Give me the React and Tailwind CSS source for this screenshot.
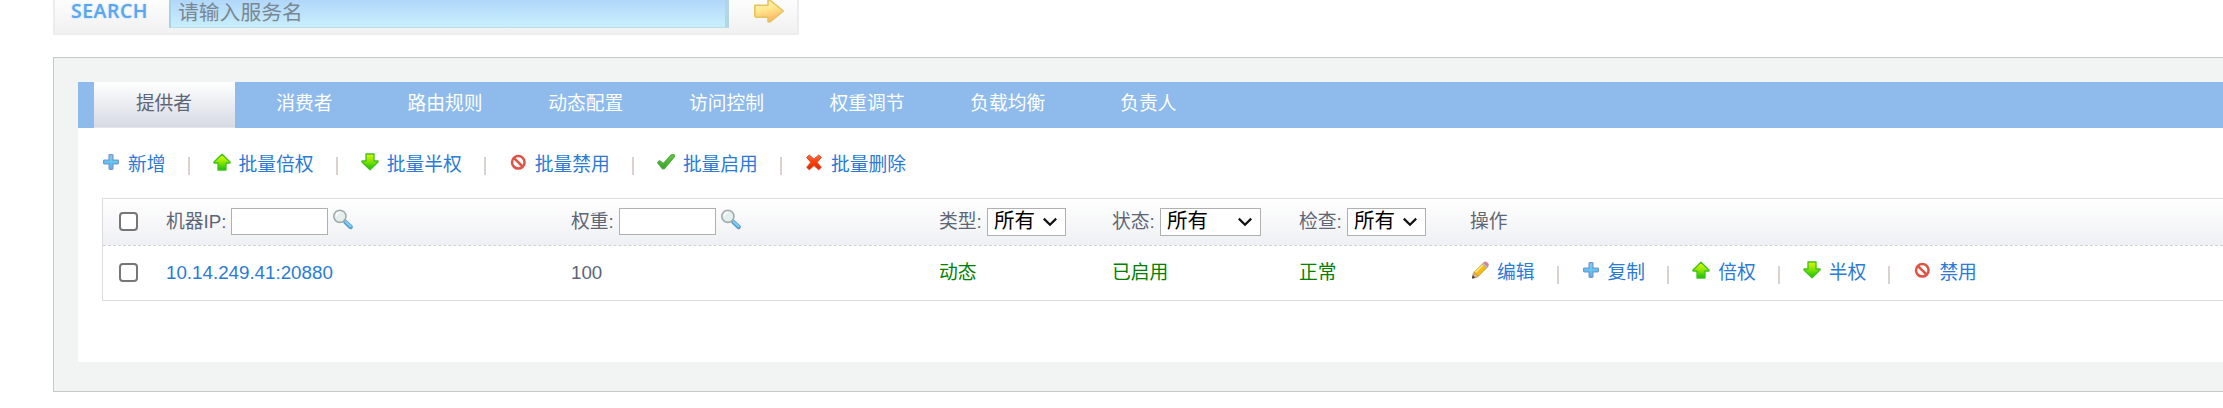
import React from "react";

const iconClass = "block h-6 w-6 shrink-0";

function PlusIcon() {
  return (
    <svg viewBox="0 0 24 24" className={iconClass}>
      <defs>
        <linearGradient id="plus" x1="0" y1="0" x2="0" y2="1">
          <stop offset="0" stopColor="#8fc9ee" />
          <stop offset="0.5" stopColor="#5fc8f4" />
          <stop offset="1" stopColor="#62aee6" />
        </linearGradient>
      </defs>
      <path
        d="M10.9 4.6h2.2a.8.8 0 0 1 .8.8v4.7h4.7a.8.8 0 0 1 .8.8v2.2a.8.8 0 0 1-.8.8h-4.7v4.7a.8.8 0 0 1-.8.8h-2.2a.8.8 0 0 1-.8-.8v-4.7H5.4a.8.8 0 0 1-.8-.8v-2.2a.8.8 0 0 1 .8-.8h4.7V5.4a.8.8 0 0 1 .8-.8z"
        fill="url(#plus)"
        stroke="#7399cf"
        strokeWidth="1.3"
      />
    </svg>
  );
}

function UpIcon() {
  return (
    <svg viewBox="0 0 24 24" className={iconClass}>
      <defs>
        <linearGradient id="up" x1="0" y1="0" x2="0" y2="1">
          <stop offset="0" stopColor="#e9fb00" />
          <stop offset="0.5" stopColor="#8fe800" />
          <stop offset="1" stopColor="#14bd0c" />
        </linearGradient>
      </defs>
      <path d="M12 4.2L20 12v1h-4v7H8v-7H4v-1z" fill="url(#up)" stroke="#3fc21c" strokeWidth="1.3" strokeLinejoin="round" />
    </svg>
  );
}

function DownIcon() {
  return (
    <svg viewBox="0 0 24 24" className={iconClass}>
      <defs>
        <linearGradient id="down" x1="0" y1="0" x2="0" y2="1">
          <stop offset="0" stopColor="#e4f500" />
          <stop offset="0.5" stopColor="#7be400" />
          <stop offset="1" stopColor="#14bd0c" />
        </linearGradient>
      </defs>
      <path d="M12 19.8L4 12v-1h4V4h8v7h4v1z" fill="url(#down)" stroke="#3fc21c" strokeWidth="1.3" strokeLinejoin="round" />
    </svg>
  );
}

function BanIcon() {
  return (
    <svg viewBox="0 0 24 24" className={iconClass}>
      <circle cx="12.3" cy="12.3" r="6.3" fill="#fff" stroke="#df5346" strokeWidth="2.5" />
      <path d="M8 8.1l8.6 8.4" stroke="#df5346" strokeWidth="2.5" />
    </svg>
  );
}

function CheckIcon() {
  return (
    <svg viewBox="0 0 24 24" className={iconClass}>
      <defs>
        <linearGradient id="check" x1="0" y1="0" x2="0" y2="1">
          <stop offset="0" stopColor="#6cc944" />
          <stop offset="1" stopColor="#37a32a" />
        </linearGradient>
      </defs>
      <path
        d="M3.6 12.6l1.9-1.9 3.8 2.8 8.2-8.8 2.6-.2.3 2.2-10.2 12.1-1.6.2z"
        fill="url(#check)"
        stroke="#4aa83c"
        strokeWidth="1.1"
        strokeLinejoin="round"
      />
    </svg>
  );
}

function CrossIcon() {
  return (
    <svg viewBox="0 0 24 24" className={iconClass}>
      <defs>
        <linearGradient id="cross" x1="0" y1="0" x2="0" y2="1">
          <stop offset="0" stopColor="#ff6a3c" />
          <stop offset="0.5" stopColor="#fb3c05" />
          <stop offset="1" stopColor="#d82a04" />
        </linearGradient>
      </defs>
      <path
        d="M7.3 5l4.7 4.2L16.7 5 19.3 7.4 15.2 12.4l4.1 4.9-2.6 2.5-4.7-4.2-4.7 4.2-2.6-2.5 4.1-4.9-4.1-5z"
        fill="url(#cross)"
        stroke="#d64a28"
        strokeWidth="1"
        strokeLinejoin="round"
      />
    </svg>
  );
}

function PencilIcon() {
  return (
    <svg viewBox="0 0 24 24" className={iconClass}>
      <path d="M5.2 15.4l1.3-1.4 4 3.8-1.4 1.4-4.6 1.2z" fill="#e8b48c" stroke="#a98168" strokeWidth="0.7" />
      <path d="M6 14.4l8.9-8.9 4.2 3.9-8.7 8.8z" fill="#f5bd16" stroke="#c18f1c" strokeWidth="0.8" />
      <path d="M7.5 14.4l8.2-8.1" stroke="#ffe67c" strokeWidth="1.5" />
      <path d="M14.3 6l1.5-1.4 4.1 3.9-1.4 1.5z" fill="#bfc4cc" stroke="#8f96a0" strokeWidth="0.6" />
      <path d="M15.8 4.7c1.4-1.2 2.8-.7 3.6.1s1.5 2.1.5 3.7z" fill="#e2828a" stroke="#b9757c" strokeWidth="0.6" />
      <path d="M3.9 20.4l.9-3.3 2.4 2.4z" fill="#3c3c3c" />
    </svg>
  );
}

function SearchIcon() {
  return (
    <svg viewBox="0 0 24 24" className={iconClass}>
      <path d="M14.4 15.2l5.3 4.8" stroke="#5b9fcd" strokeWidth="4.4" strokeLinecap="round" />
      <path d="M14.6 14.7l5 4.5" stroke="#7fcdf5" strokeWidth="2.2" strokeLinecap="round" />
      <circle cx="8.9" cy="9.3" r="6.1" fill="#e4f0ee" stroke="#a3abab" strokeWidth="1.6" />
      <path d="M5.4 9.2a3.6 3.6 0 0 1 3.4-3.6" stroke="#fff" strokeWidth="1.4" fill="none" />
    </svg>
  );
}

function GoArrow() {
  return (
    <svg viewBox="0 0 32 26" className="block h-[26px] w-8 shrink-0">
      <defs>
        <linearGradient id="go" x1="0" y1="0" x2="0.3" y2="1">
          <stop offset="0" stopColor="#fff6b8" />
          <stop offset="0.5" stopColor="#ffe78c" />
          <stop offset="1" stopColor="#fdb56a" />
        </linearGradient>
      </defs>
      <path
        d="M2 7.2h13V2.4L17 2.2 30.4 13 17 24l-2-.2V19.2H3L1.8 18V8z"
        fill="url(#go)"
        stroke="#e6c35f"
        strokeWidth="1.6"
        strokeLinejoin="round"
      />
    </svg>
  );
}

const tabs = ["消费者", "路由规则", "动态配置", "访问控制", "权重调节", "负载均衡", "负责人"];

const bulkActions = [
  ["新增", PlusIcon],
  ["批量倍权", UpIcon],
  ["批量半权", DownIcon],
  ["批量禁用", BanIcon],
  ["批量启用", CheckIcon],
  ["批量删除", CrossIcon],
];

const rowActions = [
  ["编辑", PencilIcon],
  ["复制", PlusIcon],
  ["倍权", UpIcon],
  ["半权", DownIcon],
  ["禁用", BanIcon],
];

function Action({ label, Icon, last, width }) {
  return (
    <div className={width + " flex shrink-0 items-center"}>
      <span className="mb-[6px]">
        <Icon />
      </span>
      <a className="ml-[5px] whitespace-nowrap text-[#2b7bd6]">{label}</a>
      {!last && <span className="mt-[3px] ml-[22px] h-[18px] w-[2px] shrink-0 bg-[#d9d2cf]" />}
    </div>
  );
}

function Checkbox() {
  return (
    <input
      type="checkbox"
      className="mb-[1px] block h-[19px] w-[19px] appearance-none rounded-[4px] border-2 border-[#767676] bg-white"
    />
  );
}

function SearchField({ label }) {
  return (
    <div className="flex items-center">
      <span className="whitespace-nowrap">{label}</span>
      <input className="mb-[1px] ml-[5px] h-[27px] w-[97px] shrink-0 border border-[#b0b0b0] bg-white" />
      <span className="mb-[6px] ml-[3px]">
        <SearchIcon />
      </span>
    </div>
  );
}

function SelectField({ label, width }) {
  return (
    <div className="flex items-center">
      <span className="w-[48px] shrink-0 whitespace-nowrap">{label}</span>
      <div className={width + " mb-[1px] flex h-[28px] shrink-0 items-center justify-between border border-[#b0b0b0] bg-white pr-[7px] pl-[6px] text-[20.5px] leading-none text-black"}>
        <span>所有</span>
        <svg viewBox="0 0 16 10" className="h-[10px] w-4">
          <path d="M1.8 1.6L8 7.8l6.2-6.2" fill="none" stroke="#111" strokeWidth="2.2" />
        </svg>
      </div>
    </div>
  );
}

const columns = "grid grid-cols-[63px_405px_368px_173px_187px_171px_1fr] items-center";

export default function App() {
  return (
    <div className="h-[408px] w-full overflow-hidden bg-white font-['Liberation_Sans','Noto_Sans_CJK_SC',sans-serif] text-[18.75px] leading-6 font-normal text-[#5d6677]">
      <div className="ml-[53px] flex h-[35px] w-[746px] rounded-b-[2px] border-x-2 border-b-2 border-[#ebecee] bg-linear-to-b from-[#fdfdfd] to-[#f1f1f2]">
        <div className="w-[114px] pl-[16px] font-['Open_Sans',sans-serif] text-[19.5px] leading-[22px] font-semibold tracking-[0.5px] text-[#5ba6f0] [text-shadow:0_0_2px_#a9d2fa]">
          SEARCH
        </div>
        <div className="h-[28px] w-[560px] border-r-4 border-b border-l-2 border-r-[#b3d6e5] border-b-[#bcdde6] border-l-[#a9cfe6] bg-linear-to-b from-[#b0d7f9] to-[#c9effd] pl-[7px] text-[20.8px] leading-[26px] text-[#7b8794]">
          请输入服务名
        </div>
        <div className="-mt-[2px] ml-[24px]">
          <GoArrow />
        </div>
      </div>

      <div className="mt-[22px] ml-[53px] h-[335px] border-y border-l border-[#c8caca] bg-[#f2f4f4] pt-6 pl-6">
        <div className="flex h-[46px] bg-[#8ebbec] pl-4">
          <div className="w-[141px] shrink-0 border-b border-[#e3e6ec] bg-linear-to-b from-white to-[#d6dae3] pr-[1px] text-center leading-[43px]">
            提供者
          </div>
          {tabs.map((tab) => (
            <div key={tab} className="w-[140.7px] shrink-0 pr-[2px] text-center leading-[43px] text-white">
              {tab}
            </div>
          ))}
        </div>

        <div className="h-[234px] bg-white pl-6">
          <div className="-ml-[3px] flex h-[70px] items-center pt-[3px]">
            {bulkActions.map(([label, Icon], i) => (
              <Action
                key={label}
                label={label}
                Icon={Icon}
                width={i === 0 ? "w-[110.6px]" : "w-[148.1px]"}
                last={i === bulkActions.length - 1}
              />
            ))}
          </div>

          <div className="h-[103px] border-y border-l border-[#dcdcdc]">
            <div className={columns + " h-[47px] border-b border-dashed border-[#d0d2d4] bg-linear-to-b from-white to-[#eff0f3]"}>
              <div className="pl-4">
                <Checkbox />
              </div>
              <SearchField label="机器IP:" />
              <SearchField label="权重:" />
              <SelectField label="类型:" width="w-[79px]" />
              <SelectField label="状态:" width="w-[101px]" />
              <SelectField label="检查:" width="w-[79px]" />
              <div>操作</div>
            </div>
            <div className={columns + " h-[54px]"}>
              <div className="pl-4">
                <Checkbox />
              </div>
              <a className="text-[#2b7bd6]">10.14.249.41:20880</a>
              <div>100</div>
              <div className="text-[#008000]">动态</div>
              <div className="text-[#008000]">已启用</div>
              <div className="text-[#008000]">正常</div>
              <div className="-ml-[2px] flex items-center">
                {rowActions.map(([label, Icon], i) => (
                  <Action key={label} label={label} Icon={Icon} width="w-[110.6px]" last={i === rowActions.length - 1} />
                ))}
              </div>
            </div>
          </div>
        </div>
      </div>
    </div>
  );
}
